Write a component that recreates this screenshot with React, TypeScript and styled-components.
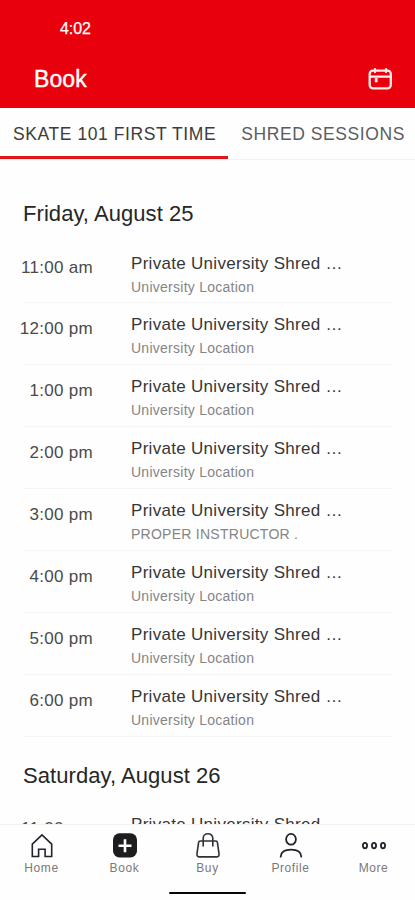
import React from 'react';
import styled, { createGlobalStyle } from 'styled-components';

const GlobalStyle = createGlobalStyle`
  * { box-sizing: border-box; }
  body {
    margin: 0;
    background: #fff;
    font-family: "Liberation Sans", Arial, sans-serif;
  }
`;

const Screen = styled.div`
  display: flex;
  flex-direction: column;
  width: 415px;
  height: 900px;
  overflow: hidden;
  background: #fefefe;
`;

const Header = styled.header`
  flex: none;
  height: 108px;
  background: #e9000d;
  color: #fff;
`;

const StatusBar = styled.div`
  height: 56px;
  padding: 19px 0 0 60px;
  font-size: 16px;
  line-height: 20px;
  letter-spacing: -0.1px;
  -webkit-text-stroke: 0.25px #fff;
`;

const TitleBar = styled.div`
  display: flex;
  align-items: center;
  justify-content: space-between;
  height: 46px;
  padding: 0 22px 0 34px;
`;

const Title = styled.h1`
  margin: 0;
  font-size: 23px;
  line-height: 28px;
  font-weight: 400;
  letter-spacing: 0.1px;
  -webkit-text-stroke: 0.4px #fff;
`;

const Tabs = styled.nav`
  display: flex;
  flex: none;
  height: 52px;
  border-bottom: 1px solid #f1f1f2;
  overflow: hidden;
`;

const Tab = styled.div<{ $active?: boolean }>`
  flex: none;
  height: 51px;
  padding: 14px 12px 0 13px;
  border-bottom: 3px solid ${(p) => (p.$active ? '#e3141c' : 'transparent')};
  color: ${(p) => (p.$active ? '#3c3c3c' : '#5c5c63')};
  font-size: 17.5px;
  line-height: 24px;
  letter-spacing: 0.58px;
  white-space: nowrap;
`;

const Schedule = styled.main`
  flex: 1;
  min-height: 0;
  overflow: hidden;
  padding: 0 23px;
`;

const DayHeading = styled.h2<{ $first?: boolean }>`
  margin: 0;
  height: ${(p) => (p.$first ? '81.5px' : '66px')};
  padding-top: ${(p) => (p.$first ? '40px' : '25px')};
  color: #262626;
  font-size: 22px;
  line-height: 28px;
  font-weight: 400;
  letter-spacing: 0.06px;
`;

const ClassRow = styled.div`
  display: flex;
  height: 61.93px;
  border-bottom: 1px solid #f5f5f5;
`;

const Time = styled.div`
  flex: none;
  width: 76px;
  margin-left: -6px;
  padding: 15px 0 0;
  color: #4a4a4a;
  font-size: 17px;
  line-height: 22px;
  letter-spacing: 0.3px;
  text-align: right;
  white-space: nowrap;
`;

const Details = styled.div`
  margin-left: 38px;
  padding-top: 11px;
  white-space: nowrap;
`;

const ClassName = styled.div`
  color: #363636;
  font-size: 17px;
  line-height: 22px;
  letter-spacing: 0.3px;
`;

const Place = styled.div`
  margin-top: 3px;
  color: #858585;
  font-size: 14px;
  line-height: 18px;
  letter-spacing: 0.26px;
`;

const BottomNav = styled.footer`
  flex: none;
  height: 76px;
  border-top: 1px solid #f1f1f1;
  background: #fefefe;
`;

const NavItems = styled.div`
  display: grid;
  grid-template-columns: repeat(5, 83px);
  height: 67px;
`;

const NavItem = styled.div`
  display: flex;
  flex-direction: column;
  align-items: center;
  padding-top: 6px;
  color: #7a7a7a;
  font-size: 12px;
  line-height: 16px;
  letter-spacing: 0.6px;

  svg { display: block; }
`;

const HomeIndicator = styled.div`
  width: 77px;
  height: 2px;
  margin: 0 auto;
  border-radius: 2px;
  background: #050505;
`;

const ink = '#22222c';

const CalendarIcon = () => (
  <svg width="26" height="26" viewBox="0 0 26 26" fill="none" stroke="#ffeceb" strokeWidth="2.3" strokeLinecap="round">
    <rect x="2.7" y="4.7" width="21.1" height="17.6" rx="3.2" />
    <path d="M3 10.7h20.5M8 3.1v3M19 3.1v3" />
    <path d="M9.2 12v4.3" strokeWidth="2.8" strokeLinecap="butt" />
  </svg>
);

const HomeIcon = () => (
  <svg width="28" height="29" viewBox="0 0 28 29" fill="none" stroke={ink} strokeWidth="1.6" strokeLinejoin="miter">
    <path d="M14 3.9 4.3 13.2v12.3h6.3v-7.3h6.5v7.3h6.6V13.2Z" />
  </svg>
);

const BookIcon = () => (
  <svg width="28" height="29" viewBox="0 0 28 29">
    <rect x="2" y="2.3" width="24" height="24.2" rx="6.5" fill="#1d1d20" />
    <path d="M14 8.2v13M7.5 14.7h13" stroke="#fff" strokeWidth="2.6" />
  </svg>
);

const BagIcon = () => (
  <svg width="28" height="29" viewBox="0 0 28 29" fill="none" stroke="#303036" strokeWidth="1.6" strokeLinejoin="round" strokeLinecap="round">
    <path d="M6.2 10h15.6c1 0 1.5.4 1.6 1.3L25 22.7c.3 2-.5 3.2-2.4 3.2H5.4c-1.9 0-2.7-1.2-2.4-3.2l1.6-11.4c.1-.9.6-1.3 1.6-1.3Z" />
    <path d="M9.2 15V7.3c0-6.1 9.6-6.1 9.6 0V15" />
  </svg>
);

const ProfileIcon = () => (
  <svg width="28" height="29" viewBox="0 0 28 29" fill="none" stroke={ink} strokeWidth="1.8" strokeLinecap="round">
    <ellipse cx="14" cy="8.3" rx="4.9" ry="5.4" />
    <path d="M3.7 25.7c.2-4.6 3.4-7.1 10.4-7.1s10 2.5 10.2 7.1" />
  </svg>
);

const MoreIcon = () => (
  <svg width="28" height="29" viewBox="0 0 28 29" fill="none" stroke={ink} strokeWidth="1.8">
    <ellipse cx="5" cy="14.6" rx="2.1" ry="2.7" />
    <ellipse cx="14" cy="14.6" rx="2.1" ry="2.7" />
    <ellipse cx="23" cy="14.6" rx="2.1" ry="2.7" />
  </svg>
);

const fridayClasses = [
  { time: '11:00 am', place: 'University Location' },
  { time: '12:00 pm', place: 'University Location' },
  { time: '1:00 pm', place: 'University Location' },
  { time: '2:00 pm', place: 'University Location' },
  { time: '3:00 pm', place: 'PROPER INSTRUCTOR .' },
  { time: '4:00 pm', place: 'University Location' },
  { time: '5:00 pm', place: 'University Location' },
  { time: '6:00 pm', place: 'University Location' },
];

const navItems = [
  { label: 'Home', Icon: HomeIcon },
  { label: 'Book', Icon: BookIcon },
  { label: 'Buy', Icon: BagIcon },
  { label: 'Profile', Icon: ProfileIcon },
  { label: 'More', Icon: MoreIcon },
];

const ClassEntry = ({ time, place }: { time: string; place: string }) => (
  <ClassRow>
    <Time>{time}</Time>
    <Details>
      <ClassName>Private University Shred …</ClassName>
      <Place>{place}</Place>
    </Details>
  </ClassRow>
);

export default function App() {
  return (
    <Screen>
      <GlobalStyle />
      <Header>
        <StatusBar>4:02</StatusBar>
        <TitleBar>
          <Title>Book</Title>
          <CalendarIcon />
        </TitleBar>
      </Header>
      <Tabs>
        <Tab $active>SKATE 101 FIRST TIME</Tab>
        <Tab>SHRED SESSIONS</Tab>
      </Tabs>
      <Schedule>
        <DayHeading $first>Friday, August 25</DayHeading>
        {fridayClasses.map((c) => (
          <ClassEntry key={c.time} {...c} />
        ))}
        <DayHeading>Saturday, August 26</DayHeading>
        <ClassEntry time="11:00 am" place="University Location" />
      </Schedule>
      <BottomNav>
        <NavItems>
          {navItems.map(({ label, Icon }) => (
            <NavItem key={label}>
              <Icon />
              {label}
            </NavItem>
          ))}
        </NavItems>
        <HomeIndicator />
      </BottomNav>
    </Screen>
  );
}
